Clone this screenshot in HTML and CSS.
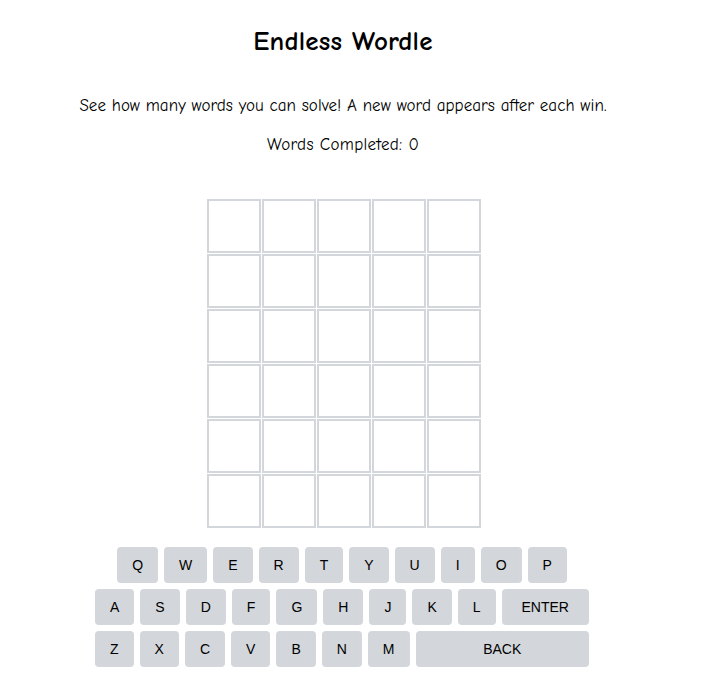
FILE: index.html
```html
<!DOCTYPE html>
<html lang="en">
<head>
<meta charset="utf-8">
<title>Endless Wordle</title>
<link rel="stylesheet" href="styles.css">
</head>
<body>
<main class="app">
  <h1 class="title">Endless Wordle</h1>
  <p class="intro">See how many words you can solve! A new word appears after each win.</p>
  <p class="score">Words Completed: 0</p>

  <div class="board">
    <div class="tile"></div><div class="tile"></div><div class="tile"></div><div class="tile"></div><div class="tile"></div>
    <div class="tile"></div><div class="tile"></div><div class="tile"></div><div class="tile"></div><div class="tile"></div>
    <div class="tile"></div><div class="tile"></div><div class="tile"></div><div class="tile"></div><div class="tile"></div>
    <div class="tile"></div><div class="tile"></div><div class="tile"></div><div class="tile"></div><div class="tile"></div>
    <div class="tile"></div><div class="tile"></div><div class="tile"></div><div class="tile"></div><div class="tile"></div>
    <div class="tile"></div><div class="tile"></div><div class="tile"></div><div class="tile"></div><div class="tile"></div>
  </div>

  <div class="keyboard">
    <div class="key-row">
      <button class="key">Q</button><button class="key">W</button><button class="key">E</button><button class="key">R</button><button class="key">T</button><button class="key">Y</button><button class="key">U</button><button class="key">I</button><button class="key">O</button><button class="key">P</button>
    </div>
    <div class="key-row">
      <button class="key">A</button><button class="key">S</button><button class="key">D</button><button class="key">F</button><button class="key">G</button><button class="key">H</button><button class="key">J</button><button class="key">K</button><button class="key">L</button><button class="key key-wide">ENTER</button>
    </div>
    <div class="key-row">
      <button class="key">Z</button><button class="key">X</button><button class="key">C</button><button class="key">V</button><button class="key">B</button><button class="key">N</button><button class="key">M</button><button class="key key-wide">BACK</button>
    </div>
  </div>
</main>
</body>
</html>
```

FILE: styles.css
```css
html, body {
  margin: 0;
  padding: 0;
  background: #ffffff;
}

body {
  font-family: "Comic Sans MS", "Comic Neue", "DejaVu Sans", sans-serif;
  color: #000;
}

.app {
  width: 686px;
  padding-top: 27px;
  text-align: center;
}

.title {
  margin: 0;
  font-size: 27px;
  line-height: 30px;
  font-weight: bold;
  letter-spacing: 0.2px;
}

.intro {
  margin: 39px 0 0;
  font-size: 17px;
  line-height: 20px;
  letter-spacing: 0.05px;
}

.score {
  margin: 19px 0 0;
  font-size: 17px;
  line-height: 20px;
  letter-spacing: 0.3px;
}

.board {
  margin: 44px auto 0;
  padding-left: 2px;
  width: 274px;
  display: grid;
  grid-template-columns: repeat(5, 54px);
  grid-auto-rows: 54px;
  gap: 1px;
}

.tile {
  box-sizing: border-box;
  border: 2px solid #d3d6da;
  background: #fff;
}

.keyboard {
  width: 494px;
  margin: 19px auto 0;
  padding-right: 2px;
  display: flex;
  flex-direction: column;
  gap: 6px;
}

.key-row {
  display: flex;
  justify-content: center;
  gap: 6px;
}

.key {
  height: 36px;
  padding: 0 15px;
  border: none;
  border-radius: 4px;
  background: #d3d6da;
  color: #000;
  font-family: "Liberation Sans", Arial, sans-serif;
  font-size: 14px;
  cursor: pointer;
}

.key-wide {
  flex-grow: 1;
}
```
